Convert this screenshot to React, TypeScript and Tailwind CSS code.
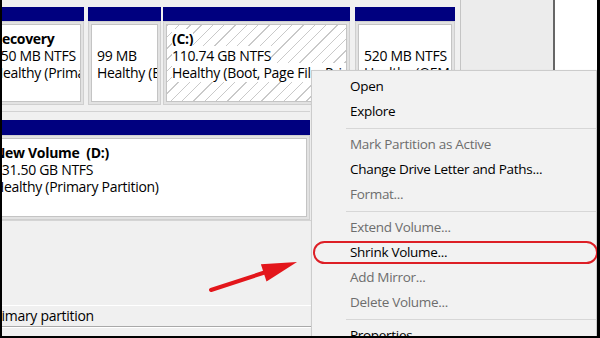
import React from 'react';

const font = { fontFamily: '"Open Sans", "Noto Sans", sans-serif' };

// one partition cell: navy strip on top, framed white box below
function Partition({ className, hatched, lines }: { className: string; hatched?: boolean; lines: string[] }) {
  return (
    <div className={`flex flex-col shrink-0 ${className}`}>
      <div className="h-[14px] bg-[#00007f]" />
      <div className="flex-1 p-[2px] bg-[#e2e2e2] border border-[#cfcfcf]">
        <div
          className={`h-full border border-[#c4c4c4] pl-[5px] pt-[5px] overflow-hidden ${
            hatched
              ? 'bg-[repeating-linear-gradient(135deg,#c9c9c9_0px,#c9c9c9_1px,#ffffff_1px,#ffffff_8px)]'
              : 'bg-white'
          }`}
        >
          {lines.map((t, i) => (
            <div key={i} className="h-[17px] leading-[17px] whitespace-nowrap">
              <span className={`${hatched ? 'bg-white' : ''} ${i === 0 ? 'font-bold' : ''}`}>{t}</span>
            </div>
          ))}
        </div>
      </div>
    </div>
  );
}

const menu: ({ t: string; off?: boolean } | null)[] = [
  { t: 'Open' },
  { t: 'Explore' },
  null,
  { t: 'Mark Partition as Active', off: true },
  { t: 'Change Drive Letter and Paths...' },
  { t: 'Format...', off: true },
  null,
  { t: 'Extend Volume...', off: true },
  { t: 'Shrink Volume...' },
  { t: 'Add Mirror...', off: true },
  { t: 'Delete Volume...', off: true },
  null,
  { t: 'Properties' },
];

export default function App() {
  return (
    <div
      style={font}
      className="relative w-[600px] h-[338px] overflow-hidden bg-[#f0f0f0] border-l-2 border-r-[3px] border-b-2 border-black text-[14px] tracking-[-0.3px] text-black"
    >
      {/* disk 0 + right-hand pane */}
      <div className="grid grid-cols-[476px_1px_92px_2px_42px] h-[120px] ml-[-18px] w-[613px]">
        <div className="flex flex-col">
          <div className="flex h-[105px] pt-[7px]">
            <Partition className="w-[100px]" lines={['Recovery', '450 MB NTFS', 'Healthy (Primary Partition)']} />
            <Partition className="ml-[4px] w-[73px]" lines={['', '99 MB', 'Healthy (EFI System Partition)']} />
            <Partition className="ml-[2px] w-[187px]" hatched lines={['(C:)', '110.74 GB NTFS', 'Healthy (Boot, Page File, Primary Partition)']} />
            <Partition className="ml-[5px] w-[100px]" lines={['', '520 MB NTFS', 'Healthy (OEM Partition)']} />
          </div>
          <div className="h-[15px] pt-[6px]">
            <div className="h-px w-[326px] bg-[#d2d2d2]" />
          </div>
        </div>
        <div className="bg-[#c4c4c4]" />
        <div className="bg-[#ececec]" />
        <div className="bg-[#666666]" />
        <div className="bg-white" />
      </div>

      {/* disk 1 */}
      <div className="flex h-[100px]">
        <div className="ml-[-18px] w-[326px] flex flex-col">
          <div className="h-[15px] bg-[#00007f]" />
          <div className="flex-1 p-[2px] bg-[#e2e2e2] border border-[#cfcfcf]">
            <div className="h-full bg-white border border-[#c4c4c4] pl-[6px] pt-[5px]">
              <div className="h-[17px] leading-[17px] font-bold whitespace-pre">New Volume  (D:)</div>
              <div className="h-[17px] leading-[17px]">931.50 GB NTFS</div>
              <div className="h-[17px] leading-[17px]">Healthy (Primary Partition)</div>
            </div>
          </div>
        </div>
      </div>

      <div className="h-[85px] border-t border-[#d4d4d4]" />

      {/* legend */}
      <div className="h-[21px] border-t border-white leading-[20px] whitespace-nowrap">
        <span className="ml-[-14px]">Primary partition</span>
      </div>
      <div className="h-px bg-[#a9a9a9]" />
      <div className="h-px bg-white" />

      {/* context menu */}
      <div className="absolute left-[309px] top-[70px] right-0 h-[300px] bg-[#f2f2f2] border border-[#cccccc] shadow-[2px_2px_3px_rgba(0,0,0,0.25)] pt-[3px] text-[13.5px]">
        {menu.map((m, i) =>
          m === null ? (
            <div key={i} className="h-[8px] flex items-center pl-[34px]">
              <div className="h-px w-full bg-[#d7d7d7]" />
            </div>
          ) : (
            <div
              key={i}
              className={`h-[25px] leading-[25px] pl-[38px] whitespace-nowrap ${m.off ? 'text-[#6d6d6d]' : 'text-black'}`}
            >
              {m.t}
            </div>
          )
        )}
      </div>

      {/* red highlight */}
      <div className="absolute left-[311px] top-[241px] w-[285px] h-[23px] rounded-full border-2 border-[#dd1f26]" />

      <svg className="absolute left-[-2px] top-0" width="600" height="338" viewBox="0 0 600 338">
        <line x1="211" y1="290" x2="266" y2="272" stroke="#e3161b" strokeWidth="4" strokeLinecap="round" />
        <polygon points="297,262 266.5,281.5 260.9,264.3" fill="#e3161b" />
      </svg>
    </div>
  );
}
